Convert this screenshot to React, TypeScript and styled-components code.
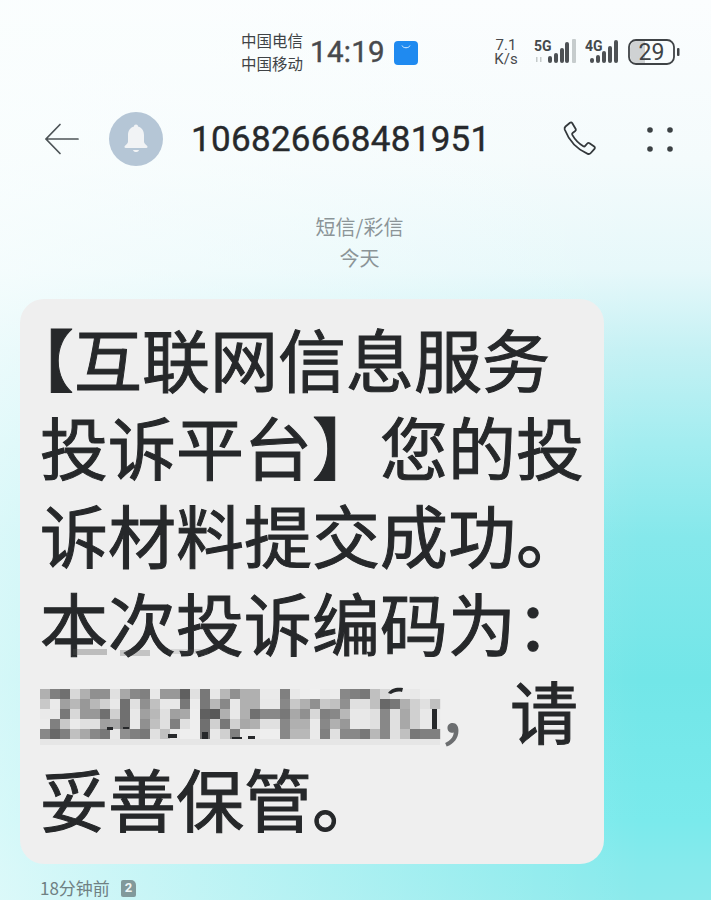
import React from "react";
import styled, { createGlobalStyle } from "styled-components";

const Global = createGlobalStyle`
  html, body { margin: 0; padding: 0; }
  body { font-family: "Noto Sans CJK SC", sans-serif; }
`;

const Page = styled.div`
  width: 711px; height: 900px; overflow: hidden; box-sizing: border-box;
  background:
    linear-gradient(to right, rgba(250,254,254,0.72) 0%, rgba(250,254,254,0.38) 42%, rgba(250,254,254,0) 90%),
    linear-gradient(to bottom, #fbfdfe 0%, #f4fbfc 160px, #e6f8fa 270px, #c5f1f4 350px, #a3edf0 443px, #85e8eb 537px, #72e6e8 680px, #7aeaec 820px, #86eaec 868px, #8beaec 900px);
  display: flex; flex-direction: column;
`;

const StatusBar = styled.div`
  height: 56px; margin-top: 24px; padding-left: 241px; padding-right: 31px;
  display: flex; align-items: center; box-sizing: border-box;
`;
const Carriers = styled.div`
  font-size: 15.5px; line-height: 23px; width: 63px; white-space: nowrap; color: #3f4346;
`;
const Clock = styled.div`
  font-family: Roboto, sans-serif; font-size: 29.5px; letter-spacing: 0.3px; width: 84px; margin-left: 6px; color: #47494c;
  -webkit-text-stroke: 0.4px #47494c;
`;
const BagIcon = styled.svg`
  margin-top: 3px;
`;
const Net = styled.div`
  font-family: Roboto, sans-serif; font-size: 15px; line-height: 14px; margin-left: 74px; width: 28px; text-align: center; color: #47494c;
`;
const Icons = styled.div`display: flex; align-items: center; margin-left: auto;`;

const Header = styled.div`
  margin-top: 28px; height: 64px; display: flex; align-items: center; padding-left: 44px;
`;
const Avatar = styled.div`
  width: 54px; height: 54px; border-radius: 50%; background: #b5c6d6; margin-left: 29px;
  display: flex; align-items: center; justify-content: center;
`;
const Phone = styled.div`
  font-family: Roboto, sans-serif; font-size: 35px; line-height: 42px; letter-spacing: 0.3px; margin-left: 28px; margin-top: 1px; width: 371px; color: #26292c; white-space: nowrap;
  -webkit-text-stroke: 0.4px #26292c;
`;
const Actions = styled.div`display: flex; align-items: center; gap: 49px;`;

const Meta = styled.div`
  text-align: center; color: #8b9497; font-size: 20px; line-height: 31px; margin-top: 40px; padding-left: 8px;
`;

const Bubble = styled.div`
  position: relative;
  margin: 26px 0 0 20px; width: 584px; height: 565px; flex-shrink: 0; box-sizing: border-box; background: #efefef;
  border-radius: 24px; padding: 15px 0 0 20px; color: #26282a;
  font-size: 68px; line-height: 88px; -webkit-text-stroke: 1px #26282a;
`;
const Line = styled.div`
  white-space: nowrap;
`;
const OpeningLine = styled(Line)`
  margin-left: -34px;
`;
const MosaicSlot = styled.span`
  display: inline-block; width: 402px; height: 1px;
`;
const Comma = styled.span`
  color: #6c6e70; -webkit-text-stroke: 0; margin-left: -6px; margin-right: 6px;
`;
const Mosaic = styled.svg`
  position: absolute; left: 20px; top: 350px;
`;

const Footer = styled.div`
  margin: 12px 0 0 40px; display: flex; align-items: center; gap: 11px;
  font-size: 17px; line-height: 24px; color: #6f8082;
`;
const Badge = styled.span`
  width: 15px; height: 17px; border-radius: 2px 5px 2px 2px; background: #81999b; color: #eef6f6;
  font-family: Roboto, sans-serif; font-size: 13px; font-weight: 700; display: flex; align-items: center; justify-content: center;
`;

const rows: number[][] = [
  [0xb0,0x80,0x70,0xd8,0xb0,0x90,0x90,0xe0,0xa8,0x88,0x80,0xe8,0x98,0x98,0x60,0xe0,0x78,0xe8,0xb8,0x90,0xb0,0xb0,0xea,0xea,0x80,0xe8,0xee,0xf0,0xea,0xec,0x88,0x80,0x78,0xc0,0xd8,0xea,0xea,0xe8,0xee,0xee],
  [0xc8,0xea,0xa0,0xb8,0x98,0xb8,0xd0,0xe8,0x70,0xe0,0x90,0xc0,0xe8,0xe8,0x78,0xec,0x78,0xb8,0x88,0xe8,0xb0,0xb0,0xe8,0xe8,0x88,0xc8,0xb0,0x90,0xc8,0xc0,0x90,0xe0,0xe0,0xc0,0x68,0x78,0xb0,0xd0,0xe0,0xc0],
  [0xea,0xe8,0x78,0xd8,0x98,0x98,0x70,0xd0,0x70,0xe8,0xa0,0xb8,0xe0,0xa0,0xa8,0xee,0x60,0x58,0xb0,0xe8,0xb0,0x70,0x88,0x88,0x78,0xa8,0x90,0xd8,0x80,0x88,0xb8,0xe8,0xe8,0xe0,0x88,0xe0,0xa8,0xd0,0xe8,0xe8],
  [0xec,0x80,0xc8,0xea,0xe0,0xe0,0xa0,0xa8,0x70,0xe8,0x90,0xc0,0xe0,0x80,0xe0,0xee,0x70,0xd0,0x78,0xd0,0xa8,0xb0,0xe0,0xe0,0x88,0xb0,0xb0,0xea,0x88,0xb0,0x98,0xe8,0xe8,0xe0,0x88,0xe0,0xa8,0xd0,0xe8,0xe8],
  [0x88,0x68,0x80,0xc0,0xa8,0x88,0x78,0xe8,0x90,0x80,0x78,0xe0,0xc0,0xe8,0xee,0xee,0x70,0xe8,0xd0,0x80,0xea,0xea,0xee,0xee,0x88,0xb8,0xb8,0xea,0x80,0xe0,0x88,0x88,0x78,0xb8,0x88,0xe0,0xc0,0x78,0x80,0x80],
];

const smudges = [
  [33, 0, 34, 6, 0.32], [80, 1, 30, 6, 0.28], [128, 0, 40, 5, 0.16],
];
const shards = [
  [67, 78, 6, 3], [83, 78, 6, 2], [128, 85, 9, 4], [162, 83, 6, 8], [192, 88, 10, 3], [208, 87, 7, 4],
];

export default function App() {
  return (
    <Page>
      <Global />
      <StatusBar>
        <Carriers>中国电信<br />中国移动</Carriers>
        <Clock>14:19</Clock>
        <BagIcon width="24" height="24" viewBox="0 0 24 24">
          <rect width="24" height="24" rx="4" fill="#1f8af0" />
          <path d="M8 4.500c1 3 7 3 8 0" fill="none" stroke="#d6ecff" strokeWidth="1" />
        </BagIcon>
        <Net>7.1<br />K/s</Net>
        <Icons>
          <svg width="46" height="28" viewBox="0 0 46 28">
            <text x="0" y="13" fontFamily="Roboto" fontWeight="700" fontSize="14" fill="#45494c">5G</text>
            <rect x="2" y="19" width="1.500" height="5" fill="#c4caca" />
            <rect x="6" y="19" width="1.500" height="5" fill="#c4caca" />
            <rect x="14" y="18" width="4" height="7" rx="2" fill="#4d5154" />
            <rect x="20" y="15" width="4" height="10" rx="2" fill="#4d5154" />
            <rect x="26" y="10" width="4" height="15" rx="2" fill="#4d5154" />
            <rect x="31" y="4" width="4" height="21" rx="2" fill="#4d5154" />
            <rect x="38" y="1" width="4" height="24" rx="1" fill="#c6cccd" />
          </svg>
          <svg width="38" height="28" viewBox="0 0 38 28" style={{ marginLeft: 5 }}>
            <text x="0" y="13" fontFamily="Roboto" fontWeight="700" fontSize="14" fill="#45494c">4G</text>
            <rect x="5" y="20" width="4" height="5" rx="2" fill="#4d5154" />
            <rect x="11" y="17" width="4" height="8" rx="2" fill="#4d5154" />
            <rect x="17" y="13" width="4" height="12" rx="2" fill="#4d5154" />
            <rect x="23" y="8" width="4" height="17" rx="2" fill="#4d5154" />
            <rect x="29" y="2" width="4" height="23" rx="2" fill="#4d5154" />
          </svg>
          <svg width="52" height="26" viewBox="0 0 52 26" style={{ marginLeft: 5 }}>
            <path d="M2 9a7 7 0 0 1 7-7h8v22H9a7 7 0 0 1-7-7z" fill="#cfd2d3" />
            <rect x="1" y="1" width="45" height="24" rx="7" fill="none" stroke="#3f4346" strokeWidth="1.800" />
            <rect x="49" y="9" width="2.500" height="8" rx="1" fill="#3f4346" />
            <text x="23.500" y="20.500" textAnchor="middle" fontFamily="Roboto" fontSize="23" fill="#3f4346">29</text>
          </svg>
        </Icons>
      </StatusBar>

      <Header>
        <svg width="36" height="36" viewBox="0 0 36 36">
          <path d="M34 18H2M16 3.500 2 18l14 14.500" fill="none" stroke="#4d5457" strokeWidth="1.700" strokeLinecap="round" />
        </svg>
        <Avatar>
          <svg width="30" height="32" viewBox="0 0 30 32">
            <path d="M15 1.500c-1.300 0-2 .8-2 1.900C8.800 4.500 7 8 7 12v6.500c0 1.800-1.500 3-3 4.300-1 .9-.6 2.200.8 2.200h20.400c1.400 0 1.800-1.300.8-2.200-1.500-1.300-3-2.500-3-4.300V12c0-4-1.800-7.500-6-8.600 0-1.100-.7-1.900-2-1.900z" fill="#f1f3f5" />
            <path d="M12 27h6c-.5 1.500-1.500 2-3 2s-2.500-.5-3-2z" fill="#f1f3f5" />
          </svg>
        </Avatar>
        <Phone>106826668481951</Phone>
        <Actions>
          <svg width="36" height="36" viewBox="0 0 36 36">
            <path d="M3.500 5.500 8 1.800c.8-.6 1.800-.4 2.300.4l3.400 5.800c.4.800.2 1.600-.5 2.100l-2.600 1.900c-.6.500-.7 1.200-.3 1.900 2.600 4.700 6.300 8.500 11 11.300.7.400 1.400.3 1.900-.3l2.100-2.400c.6-.7 1.500-.8 2.200-.3l4.700 3.300c.8.600.9 1.600.3 2.300l-3.700 4.200c-.8.900-2 1.200-3.100.8C15.500 28.500 7 19.500 2.700 8.500c-.3-1 0-2.200.8-3z" fill="none" stroke="#33383b" strokeWidth="1.800" strokeLinejoin="round" />
          </svg>
          <svg width="26" height="25" viewBox="0 0 26 25">
            <circle cx="3" cy="3" r="2.800" fill="#3c4144" />
            <circle cx="23" cy="3" r="2.800" fill="#3c4144" />
            <circle cx="3" cy="22" r="2.800" fill="#3c4144" />
            <circle cx="23" cy="22" r="2.800" fill="#3c4144" />
          </svg>
        </Actions>
      </Header>

      <Meta>短信/彩信<br />今天</Meta>

      <Bubble>
        <OpeningLine>【互联网信息服务</OpeningLine>
        <Line>投诉平台】您的投</Line>
        <Line>诉材料提交成功。</Line>
        <Line>本次投诉编码为：</Line>
        <Line><MosaicSlot /><Comma>，</Comma>请</Line>
        <Line>妥善保管。</Line>
        <Mosaic width="420" height="100" viewBox="0 0 420 100">
          {smudges.map(([x, y, w, h, o], i) => (
            <rect key={`s${i}`} x={x} y={y} width={w} height={h} fill="#555" opacity={o} />
          ))}
          {rows.map((r, y) =>
            r.map((g, x) => (
              <rect key={`${x}-${y}`} x={x * 10} y={40 + y * 10} width="10.200" height="10.200" fill={`rgb(${g},${g},${g})`} />
            )),
          )}
          {shards.map(([x, y, w, h], i) => (
            <rect key={`d${i}`} x={x} y={y} width={w} height={h} fill="#26282a" />
          ))}
          <rect x="0" y="90" width="400" height="6" fill="#e6e6e6" />
          <rect x="392" y="60" width="5" height="20" fill="#26282a" />
          <path d="M348 44c3-5 9-6 15-5l-1 4c-4-1-8 0-11 2z" fill="#26282a" />
        </Mosaic>
      </Bubble>

      <Footer>18分钟前<Badge>2</Badge></Footer>
    </Page>
  );
}
